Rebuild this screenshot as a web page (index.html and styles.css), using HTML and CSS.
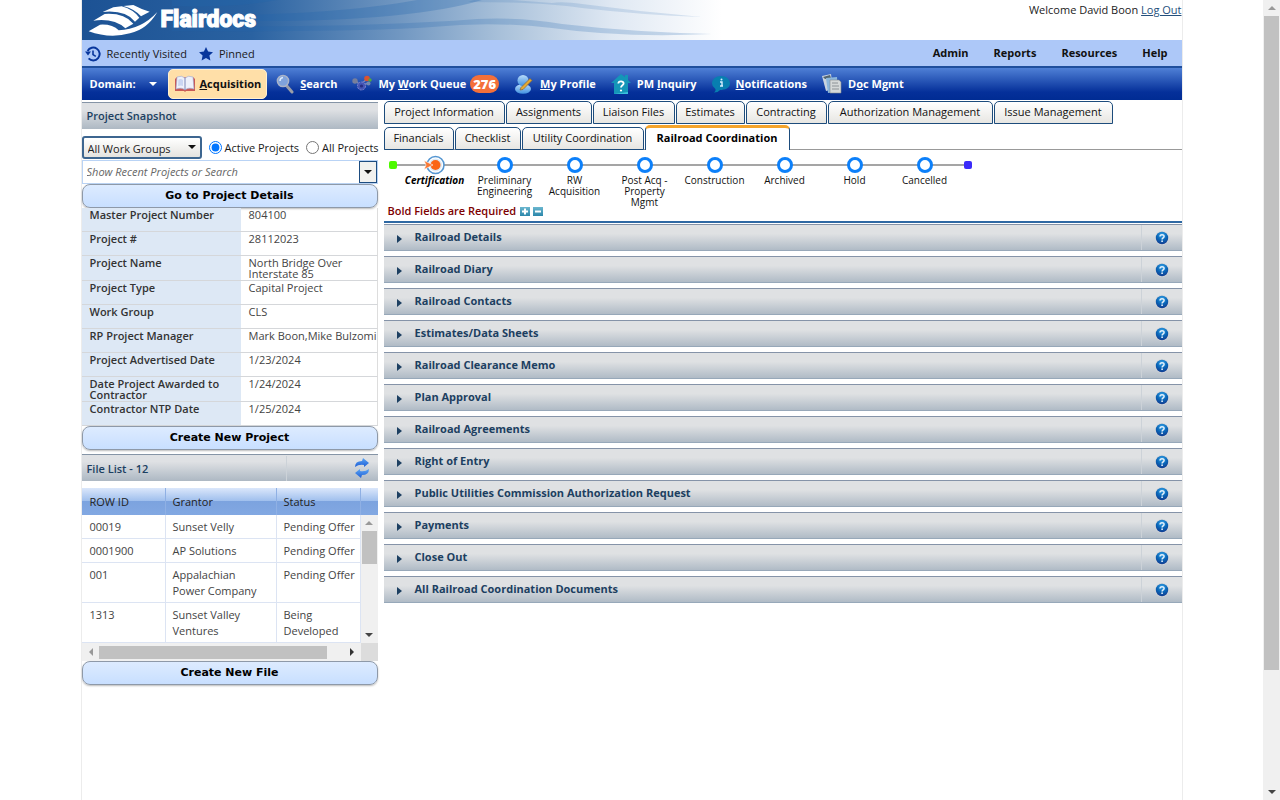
FILE: index.html
```html
<!DOCTYPE html>
<html lang="en">
<head>
<meta charset="utf-8">
<title>Flairdocs - Railroad Coordination</title>
<link rel="stylesheet" href="styles.css">
</head>
<body>
<svg class="defs" aria-hidden="true">
  <defs>
    <radialGradient id="help-fill" cx="50%" cy="25%" r="75%"><stop offset="0" stop-color="#35a3e8"/><stop offset="0.55" stop-color="#0a67b8"/><stop offset="1" stop-color="#123c90"/></radialGradient>
    <linearGradient id="glass" x1="0" y1="0" x2="0" y2="1"><stop offset="0" stop-color="#b9dcfa"/><stop offset="1" stop-color="#3f8fe0"/></linearGradient>
    <linearGradient id="refresh-fill" x1="0" y1="0" x2="0" y2="1"><stop offset="0" stop-color="#5aa4f4"/><stop offset="1" stop-color="#1f5fd6"/></linearGradient>
    <symbol id="help" viewBox="0 0 14 14"><circle cx="7" cy="7" r="7" fill="#d3d5d8"/><circle cx="7" cy="7" r="6.2" fill="url(#help-fill)"/><path d="M5 5.4C5 3.2 9.1 3.1 9.1 5.4C9.1 6.8 7.1 6.8 7.1 8.4" fill="none" stroke="#e4f0fb" stroke-width="1.5"/><circle cx="7.1" cy="10.2" r="0.9" fill="#e4f0fb"/></symbol>
  </defs>
</svg>
<div class="page">
  <header class="banner">
    <svg class="banner-waves" viewBox="0 0 640 40" preserveAspectRatio="none" aria-hidden="true">
      <g fill="#2266ac">
        <path d="M90 16Q250 16 335 0H400Q330 21 178 21L90 24Z" opacity="0.28"/>
        <path d="M90 26Q280 28 395 19Q440 17 480 24Q550 32 630 34Q540 38 470 28Q410 21 350 27Q280 32 90 31Z" opacity="0.22"/>
        <path d="M386 2Q460 2 500 8Q560 15 620 17Q560 12 500 4Q480 1 470 3L430 0H392Z" opacity="0.15"/>
        <path d="M90 6Q150 8 196 0H90Z" opacity="0.3"/>
      </g>
    </svg>
    <a class="brand" href="#">
      <svg width="70" height="33" viewBox="0 0 210 99" aria-hidden="true">
        <g fill="#fff">
          <path d="M106 6L136 3Q158 15 185 23L159 37Q140 15 106 6Z"/>
          <path d="M44 24L76 10L101 7Q135 16 154 41L141 53Q112 17 44 24Z"/>
          <path d="M16 50L50 30Q108 26 136 59L112 73Q78 42 16 50Z"/>
          <path d="M2 82L36 62Q74 60 92 79Q160 76 208 24Q178 76 126 88Q66 105 2 82Z"/>
        </g>
      </svg>
      <span class="brand-name">Flairdocs</span>
    </a>
    <p class="welcome">Welcome David Boon <a href="#">Log Out</a></p>
  </header>

  <div class="quickbar">
    <a class="quick" href="#">
      <svg width="16" height="16" viewBox="0 0 16 16" aria-hidden="true"><path d="M2.6 5A6.4 6.4 0 1 1 3.6 12.4" fill="none" stroke="#08369c" stroke-width="2"/><path d="M0 5.5H6L3 9.5Z" fill="#08369c"/><path d="M8 4.4V8.6L10.8 10.4" fill="none" stroke="#08369c" stroke-width="1.6"/></svg>
      Recently Visited</a>
    <a class="quick" href="#">
      <svg width="14" height="14" viewBox="0 0 14 14" aria-hidden="true"><path d="M7 0L9.1 4.6L14 5.2L10.4 8.6L11.4 13.6L7 11.1L2.6 13.6L3.6 8.6L0 5.2L4.9 4.6Z" fill="#08369c"/></svg>
      Pinned</a>
    <nav class="admin-links"><a href="#">Admin</a><a href="#">Reports</a><a href="#">Resources</a><a href="#">Help</a></nav>
  </div>

  <nav class="navbar">
    <button class="domain" type="button">Domain: <i class="caret"></i></button>
    <a class="nav-item nav-active" href="#">
      <svg width="22" height="18" viewBox="0 0 22 18" aria-hidden="true"><path d="M1 4L3 2H19L21 4V16H12L11 17L10 16H1Z" fill="#c95a56"/><path d="M3 2Q8 0 11 3Q14 0 19 2L20 14Q14 12 11 15Q8 12 2 14Z" fill="#eef1fa" stroke="#9aa5cf" stroke-width="0.6"/><path d="M11 3V15" stroke="#7b86b5"/><path d="M4.500 4.500Q7 3.500 9 5V11Q7 10 4 11Z" fill="#cbd6f2"/></svg>
      <span><u>A</u>cquisition</span></a>
    <a class="nav-item" href="#">
      <svg width="18" height="20" viewBox="0 0 18 20" aria-hidden="true"><path d="M10 11L16 18" stroke="#9b9ea8" stroke-width="3" stroke-linecap="round"/><circle cx="7" cy="7" r="5.600" fill="#7fa3dc" stroke="#aab4c8" stroke-width="1.500"/><path d="M4 7Q4 4 7 3.600" fill="none" stroke="#dcebff" stroke-width="1.500"/></svg>
      <span><u>S</u>earch</span></a>
    <a class="nav-item" href="#">
      <svg width="20" height="18" viewBox="0 0 20 18" aria-hidden="true"><path d="M4 6L8 10L15 4M9 11L16 8" stroke="#7886bd" stroke-width="1.500" fill="none"/><circle cx="3" cy="6" r="2.700" fill="#777f9b"/><circle cx="9.500" cy="11" r="4" fill="#4455b6" stroke="#7e83cb" stroke-dasharray="2 1"/><circle cx="9.500" cy="11" r="1.600" fill="#272e82"/><circle cx="15" cy="3.500" r="2.800" fill="#d95431"/><circle cx="18" cy="5" r="1.700" fill="#50a843"/><circle cx="16.500" cy="8.500" r="2" fill="#7188b2"/></svg>
      <span>My <u>W</u>ork Queue</span><b class="badge">276</b></a>
    <a class="nav-item" href="#">
      <svg width="20" height="20" viewBox="0 0 20 20" aria-hidden="true"><ellipse cx="9" cy="15" rx="8" ry="4.800" fill="url(#glass)"/><circle cx="9" cy="6.500" r="5.500" fill="url(#glass)"/><path d="M7 13.500L16 4.500L18 6.500L9 15.500L6 16Z" fill="#e5a931" stroke="#836637" stroke-width="0.700"/></svg>
      <span><u>M</u>y Profile</span></a>
    <a class="nav-item" href="#">
      <svg width="20" height="21" viewBox="0 0 20 21" aria-hidden="true"><path d="M0 9L10 0L14 3V1H17V6L20 9H17V20H3V9Z" fill="#1496b8"/><path d="M3 20L17 18V20Z" fill="#3bc1dd"/><path d="M7.300 9.500C7.500 6.600 12.900 6.800 12.600 9.700C12.400 11.300 10 11.300 10 13.500" fill="none" stroke="#fff" stroke-width="1.800"/><circle cx="10" cy="16.500" r="1.100" fill="#fff"/></svg>
      <span>PM <u>I</u>nquiry</span></a>
    <a class="nav-item" href="#">
      <svg width="18" height="18" viewBox="0 0 18 18" aria-hidden="true"><path d="M9 1C14 1 18 4 18 8.500S13 15 8 15Q6 17.500 2 17.500Q4.500 15.500 3 13.500Q0 11.500 0 8.500C0 4 4 1 9 1Z" fill="#087fb0"/><path d="M8 7H10V11H11M8 11H10" fill="none" stroke="#d8efff" stroke-width="1.400"/><circle cx="9.500" cy="4.600" r="1" fill="#d8efff"/></svg>
      <span><u>N</u>otifications</span></a>
    <a class="nav-item" href="#">
      <svg width="20" height="20" viewBox="0 0 20 20" aria-hidden="true"><path d="M0 2L9 0L11 15L4 17Z" fill="#c9d3df"/><path d="M1 3L8 1L9 4L3 5Z" fill="#52646f"/><path d="M4 4L15 3L16 18L6 19Z" fill="#8bb7dd"/><path d="M8 6H17L19 8V19H8Z" fill="#d5d9d9" stroke="#858b8f" stroke-width="0.600"/><path d="M10 9H16M10 12H17M10 15H17" stroke="#8c9296"/></svg>
      <span>D<u>o</u>c Mgmt</span></a>
  </nav>

  <div class="columns">
    <aside class="sidebar">
      <h2 class="panel-title">Project Snapshot</h2>
      <div class="filters">
        <span class="select-box">
          <select aria-label="Work group"><option>All Work Groups</option></select>
          <i class="caret"></i>
        </span>
        <label><input type="radio" name="scope" checked>Active Projects</label>
        <label><input type="radio" name="scope">All Projects</label>
      </div>
      <div class="combo">
        <input type="text" placeholder="Show Recent Projects or Search" aria-label="Show recent projects or search">
        <button type="button" aria-label="Open list"><i class="caret"></i></button>
      </div>
      <button class="wide-button" type="button">Go to Project Details</button>
      <table class="details">
        <tr><th scope="row">Master Project Number</th><td>804100</td></tr>
        <tr><th scope="row">Project #</th><td>28112023</td></tr>
        <tr><th scope="row">Project Name</th><td>North Bridge Over<br>Interstate 85</td></tr>
        <tr><th scope="row">Project Type</th><td>Capital Project</td></tr>
        <tr><th scope="row">Work Group</th><td>CLS</td></tr>
        <tr><th scope="row">RP Project Manager</th><td>Mark Boon,Mike Bulzomi</td></tr>
        <tr><th scope="row">Project Advertised Date</th><td>1/23/2024</td></tr>
        <tr><th scope="row">Date Project Awarded to<br>Contractor</th><td>1/24/2024</td></tr>
        <tr><th scope="row">Contractor NTP Date</th><td>1/25/2024</td></tr>
      </table>
      <button class="wide-button" type="button">Create New Project</button>
      <div class="panel-title file-title">
        <h2>File List - 12</h2>
        <button type="button" aria-label="Refresh">
          <svg width="16" height="20" viewBox="0 0 16 20" aria-hidden="true"><path d="M1 9Q1 3 8 3L9 0L15 5L10 9V7Q5 6 1 9Z" fill="url(#refresh-fill)"/><path d="M15 11Q15 17 8 17L7 20L1 15L6 11V13Q11 14 15 11Z" fill="url(#refresh-fill)"/></svg>
        </button>
      </div>
      <div class="file-grid">
        <table class="files">
          <colgroup><col class="col-id"><col class="col-grantor"><col class="col-status"></colgroup>
          <thead><tr><th>ROW ID</th><th>Grantor</th><th>Status</th></tr></thead>
          <tbody>
            <tr><td>00019</td><td>Sunset Velly</td><td>Pending Offer</td></tr>
            <tr><td>0001900</td><td>AP Solutions</td><td>Pending Offer</td></tr>
            <tr><td>001</td><td>Appalachian<br>Power Company</td><td>Pending Offer</td></tr>
            <tr><td>1313</td><td>Sunset Valley<br>Ventures</td><td>Being<br>Developed</td></tr>
          </tbody>
        </table>
        <div class="vbar-side">
          <div class="vbar"><i class="arrow up"></i><i class="thumb grid-thumb"></i><i class="arrow down"></i></div>
        </div>
        <div class="hbar"><i class="arrow left"></i><i class="hthumb"></i><i class="arrow right"></i></div>
        <div class="corner"></div>
      </div>
      <button class="wide-button" type="button">Create New File</button>
    </aside>

    <main class="content">
      <nav class="tabs tabs-upper">
        <a href="#">Project Information</a><a href="#">Assignments</a><a href="#">Liaison Files</a><a href="#">Estimates</a><a href="#">Contracting</a><a href="#">Authorization Management</a><a href="#">Issue Management</a>
      </nav>
      <nav class="tabs tabs-lower">
        <a href="#">Financials</a><a href="#">Checklist</a><a href="#">Utility Coordination</a><a class="tab-current" href="#">Railroad Coordination</a>
      </nav>
      <ol class="steps">
        <li class="end start"><i></i></li>
        <li class="step current"><svg width="22" height="20" viewBox="0 0 22 20" aria-hidden="true"><circle cx="11.500" cy="10" r="8.500" fill="#fff" stroke="#5596d1" stroke-width="1.600"/><circle cx="11.500" cy="10" r="6.500" fill="#dce8f3"/><circle cx="11.500" cy="10" r="5" fill="#fb6514"/><path d="M0 5.500L9 10L0 14.500L2 10Z" fill="#fb7935" stroke="#fff" stroke-width="0.600"/></svg><span>Certification</span></li>
        <li class="step"><i class="node"></i><span>Preliminary<br>Engineering</span></li>
        <li class="step"><i class="node"></i><span>RW<br>Acquisition</span></li>
        <li class="step"><i class="node"></i><span>Post Acq -<br>Property<br>Mgmt</span></li>
        <li class="step"><i class="node"></i><span>Construction</span></li>
        <li class="step"><i class="node"></i><span>Archived</span></li>
        <li class="step"><i class="node"></i><span>Hold</span></li>
        <li class="step"><i class="node"></i><span>Cancelled</span></li>
        <li class="end finish"><i></i></li>
      </ol>
      <div class="required">
        <strong>Bold Fields are Required</strong>
        <button type="button" aria-label="Expand all"><svg width="10" height="9" viewBox="0 0 10 9"><path d="M5 1.500V7.500M2 4.500H8" stroke="#fff" stroke-width="2"/></svg></button>
        <button type="button" aria-label="Collapse all"><svg width="10" height="9" viewBox="0 0 10 9"><path d="M2 4.500H8" stroke="#fff" stroke-width="2"/></svg></button>
      </div>
      <div class="sections">
        <section><button class="toggle" type="button">Railroad Details</button><button class="help" type="button" aria-label="Help"><svg width="14" height="14"><use href="#help"/></svg></button></section>
        <section><button class="toggle" type="button">Railroad Diary</button><button class="help" type="button" aria-label="Help"><svg width="14" height="14"><use href="#help"/></svg></button></section>
        <section><button class="toggle" type="button">Railroad Contacts</button><button class="help" type="button" aria-label="Help"><svg width="14" height="14"><use href="#help"/></svg></button></section>
        <section><button class="toggle" type="button">Estimates/Data Sheets</button><button class="help" type="button" aria-label="Help"><svg width="14" height="14"><use href="#help"/></svg></button></section>
        <section><button class="toggle" type="button">Railroad Clearance Memo</button><button class="help" type="button" aria-label="Help"><svg width="14" height="14"><use href="#help"/></svg></button></section>
        <section><button class="toggle" type="button">Plan Approval</button><button class="help" type="button" aria-label="Help"><svg width="14" height="14"><use href="#help"/></svg></button></section>
        <section><button class="toggle" type="button">Railroad Agreements</button><button class="help" type="button" aria-label="Help"><svg width="14" height="14"><use href="#help"/></svg></button></section>
        <section><button class="toggle" type="button">Right of Entry</button><button class="help" type="button" aria-label="Help"><svg width="14" height="14"><use href="#help"/></svg></button></section>
        <section><button class="toggle" type="button">Public Utilities Commission Authorization Request</button><button class="help" type="button" aria-label="Help"><svg width="14" height="14"><use href="#help"/></svg></button></section>
        <section><button class="toggle" type="button">Payments</button><button class="help" type="button" aria-label="Help"><svg width="14" height="14"><use href="#help"/></svg></button></section>
        <section><button class="toggle" type="button">Close Out</button><button class="help" type="button" aria-label="Help"><svg width="14" height="14"><use href="#help"/></svg></button></section>
        <section><button class="toggle" type="button">All Railroad Coordination Documents</button><button class="help" type="button" aria-label="Help"><svg width="14" height="14"><use href="#help"/></svg></button></section>
      </div>
    </main>
  </div>
</div>
<div class="vbar page-bar" aria-hidden="true"><i class="arrow up"></i><i class="thumb"></i><i class="arrow down"></i></div>
</body>
</html>
```
FILE: styles.css
```css
* { box-sizing: border-box; }
body {
  margin: 0;
  display: flex;
  min-height: 100vh;
  background: #fff;
  color: #1a1a1a;
  font: 11px/16px "Open Sans", "Noto Sans", sans-serif;
}
a { color: inherit; text-decoration: none; }
button, input, select { font: inherit; color: inherit; margin: 0; }
button { border: 0; padding: 0; background: none; cursor: pointer; }
svg { display: block; flex: none; }
h2, p, ol { margin: 0; padding: 0; }
.defs { position: absolute; width: 0; height: 0; }
.page {
  flex: 1;
  max-width: 1102px;
  margin: 0 auto;
  border: solid #ececec;
  border-width: 0 1px;
}

/* Banner */
.banner {
  position: relative;
  display: flex;
  justify-content: space-between;
  height: 40px;
  background: linear-gradient(90deg, #1c5294 0, #2a62a1 170px, #7298c2 320px, #a9c1da 420px, #dfe8f3 530px, #fff 640px);
}
.banner-waves { position: absolute; left: 0; top: 0; width: 640px; height: 40px; }
.brand { position: relative; display: flex; align-items: center; gap: 3px; padding-left: 6px; color: #fff; }
.brand-name { font: 900 23px/36px Roboto, sans-serif; -webkit-text-stroke: 1px #fff; }
.welcome { padding-top: 2px; color: #222; }
.welcome a { color: #244f7c; text-decoration: underline; }

/* Shortcut bar */
.quickbar { display: flex; align-items: center; height: 26px; padding: 0 14px 0 3px; background: #adc8f8; }
.quick { display: flex; align-items: center; gap: 6px; margin-right: 12px; padding-top: 1px; }
.admin-links { display: flex; gap: 25px; margin-left: auto; font-weight: 700; font-size: 11px; color: #111; }

/* Main navigation */
.navbar {
  display: flex;
  align-items: center;
  height: 34px;
  border-top: 2px solid #1f4f9d;
  background: linear-gradient(#4f80d6, #05309a 75%, #002c93);
  color: #fff;
  font-size: 11px;
  font-weight: 700;
}
.domain { display: flex; align-items: center; gap: 13px; width: 86px; padding-left: 8px; font-weight: 700; }
.caret { border: solid transparent; border-width: 4px 4px 0; border-top-color: currentColor; }
.nav-item { display: flex; align-items: center; gap: 6px; margin-right: 15px; white-space: nowrap; }
.nav-active {
  height: 30px;
  margin-right: 9px;
  padding: 0 5px;
  gap: 4px;
  border: 1px solid #fff0cf;
  border-radius: 5px;
  background: #ffdfa8;
  color: #111;
}
.badge { margin-left: -2px; padding: 0 3px; border-radius: 9px; background: #f4703a; font-size: 13px; line-height: 18px; }

/* Columns */
.columns { display: flex; gap: 6px; }
.sidebar { flex: none; width: 296px; padding-top: 2px; }
.content { flex: 1; min-width: 0; padding-top: 1px; }
.panel-title {
  height: 27px;
  padding-left: 5px;
  border-top: 1px solid #8594a6;
  background: linear-gradient(#dfe1e4 25%, #adb8c3);
  color: #1c3f61;
  font-size: 11px;
  font-weight: 600;
  line-height: 25px;
}
.filters { display: flex; align-items: center; gap: 7px; height: 31px; padding-top: 6px; white-space: nowrap; }
.select-box { position: relative; flex: none; width: 120px; }
.select-box select {
  appearance: none;
  display: block;
  width: 100%;
  height: 23px;
  padding: 2px 4px 0;
  border: 2px solid #3d6690;
  border-radius: 3px;
  background: linear-gradient(#fff, #e4e3df);
  color: #222;
}
.select-box .caret { position: absolute; right: 6px; top: 9px; pointer-events: none; color: #111; }
.filters label { display: flex; align-items: center; gap: 3px; font-size: 11px; }
.filters input { flex: none; width: 13px; height: 13px; }
.combo { display: flex; height: 24px; border: 1px solid #b9d3f5; }
.combo input { flex: 1; min-width: 0; padding: 0 4px; border: 0; font-style: italic; }
.combo input::placeholder { color: #666; opacity: 1; }
.combo button { width: 18px; display: grid; place-items: center; border: 1px solid #1d4c80; background: #f1f1ef; color: #111; }
.wide-button {
  display: block;
  width: 100%;
  height: 24px;
  border: 1px solid #8e99a8;
  border-radius: 8px;
  background: linear-gradient(#ddebff, #c8dfff);
  box-shadow: 0 1px 2px #bbb;
  color: #000;
  font: bold 11px/22px "DejaVu Sans", sans-serif;
}
.details { width: 100%; border-collapse: separate; border-spacing: 0; line-height: 11px; }
.details th, .details td {
  height: 24px;
  padding: 1px 0 1px 8px;
  border-bottom: 1px solid #d5d7da;
  text-align: left;
  vertical-align: top;
  white-space: nowrap;
}
.details th { width: 161px; background: #dde8f5; color: #333; font-size: 11px; font-weight: 600; }
.details td { border-right: 1px solid #ddd; color: #444; }

/* File list */
.file-title { display: flex; align-items: center; justify-content: space-between; height: 27px; margin: 4px 0 7px; padding-right: 8px; }
.file-title h2 { font: inherit; }
.file-title button { width: 84px; height: 25px; display: flex; align-items: center; justify-content: flex-end; border-left: 1px solid #ccd2d8; }
.file-grid { display: grid; grid-template-columns: 1fr 17px; }
.files { width: 100%; table-layout: fixed; border-collapse: separate; border-spacing: 0; color: #444; }
.col-id { width: 84px; }
.col-grantor { width: 111px; }
.files th {
  height: 27px;
  padding: 0 7px;
  border-right: 1px solid #8fb0e4;
  background: linear-gradient(#dbe7fb, #9fbfed 48%, #7ca3df 50%, #82a8e2);
  color: #222;
  font-weight: 400;
  text-align: left;
}
.files td { padding: 4px 0 3px 7px; border: solid #dce4f3; border-width: 0 1px 1px 0; vertical-align: top; white-space: nowrap; }
.files th:first-child, .files td:first-child { padding-left: 8px; }
.vbar-side { display: flex; padding-top: 27px; background: linear-gradient(#dbe7fb, #9fbfed 13px, #7ca3df 13px, #82a8e2 27px, #f0f0f0 27px); }
.vbar { display: flex; flex-direction: column; align-items: center; flex: 1; padding: 6px 1px; background: #f0f0f0; }
.arrow { flex: none; border: 4px solid transparent; }
.up { border-top: 0; border-bottom-color: #999; }
.down { margin-top: auto; border-bottom: 0; border-top-color: #444; }
.left { border-left: 0; border-right-color: #999; }
.right { margin-left: auto; border-right: 0; border-left-color: #333; }
.thumb { width: 100%; margin-top: 6px; background: #c1c1c1; }
.grid-thumb { height: 33px; }
.hbar { display: flex; align-items: center; height: 18px; padding: 0 7px; background: #f0f0f0; }
.hthumb { width: 228px; height: 13px; margin-left: 6px; background: #c1c1c1; }
.corner { background: #dcdcdc; }

/* Tabs */
.tabs { display: grid; gap: 1px; text-align: center; line-height: 20px; }
.tabs-upper { grid-template-columns: 121px 86px 82px 69px 81px 165px 119px; height: 23px; }
.tabs-lower { grid-template-columns: 70px 66px 122px 1fr; height: 26px; padding-top: 3px; border-bottom: 1px solid #999; }
.tabs a {
  border: 1px solid #1d4c7c;
  border-radius: 5px 5px 0 0;
  background: linear-gradient(#fff, #e7e6e2);
  color: #111;
  white-space: nowrap;
}
.tabs .tab-current { width: 145px; height: 25px; margin-top: -2px; border-top: 3px solid #f5a42b; border-bottom: 0; background: #fff; color: #000; font-weight: 700; }

/* Workflow steps */
.steps { display: flex; height: 55px; padding-top: 5px; list-style: none; }
.step {
  display: flex;
  flex-direction: column;
  align-items: center;
  width: 70px;
  background: linear-gradient(#a5a5a5, #a5a5a5) 0 9px / 100% 2px no-repeat;
  color: #111;
  font-size: 10px;
  line-height: 11px;
  text-align: center;
  white-space: nowrap;
}
.current { font-style: italic; font-weight: 700; color: #000; }
.node { flex: none; width: 16px; height: 16px; margin: 2px 0; border: 3px solid #0c80fa; border-radius: 50%; background: #fff; }
.end { width: 16px; padding-top: 6px; background: linear-gradient(#a5a5a5, #a5a5a5) 100% 9px / 8px 2px no-repeat; }
.end i { display: block; width: 8px; height: 8px; border-radius: 2px; margin-left: 5px; background: #4dfa00; }
.end.finish { width: 12px; background-position: 0 9px; background-size: 4px 2px; }
.finish i { margin-left: 4px; background: #3b2bfa; }
.required { display: flex; align-items: center; gap: 3px; height: 18px; padding: 0 0 4px 4px; border-bottom: 2px solid #2e68a3; color: #7d0000; }
.required strong { margin-right: 1px; font-weight: 600; }
.required button { background: linear-gradient(#6bb7cf, #2b86aa); }

/* Collapsible sections */
.sections { display: flex; flex-direction: column; gap: 5px; padding-top: 1px; }
.sections section {
  display: flex;
  height: 27px;
  border: solid #97a8b9;
  border-width: 1px 0;
  border-top-color: #8593a8;
  background: linear-gradient(#dfe1e3 35%, #b0bbc6);
}
.toggle { display: flex; align-items: center; flex: 1; gap: 13px; padding: 0 0 2px 13px; color: #1c3f61; font-weight: 700; text-align: left; }
.toggle::before { content: ""; border: solid transparent; border-width: 4px 0 4px 5px; border-left-color: #1c3f61; margin-top: 4px; }
.help { width: 41px; display: grid; place-items: center; border-left: 1px solid #ccd2d8; }

/* Page scroll track */
.page-bar { position: sticky; top: 0; flex: none; width: 17px; height: 100vh; }
.page-bar .thumb { height: 83%; }
```
